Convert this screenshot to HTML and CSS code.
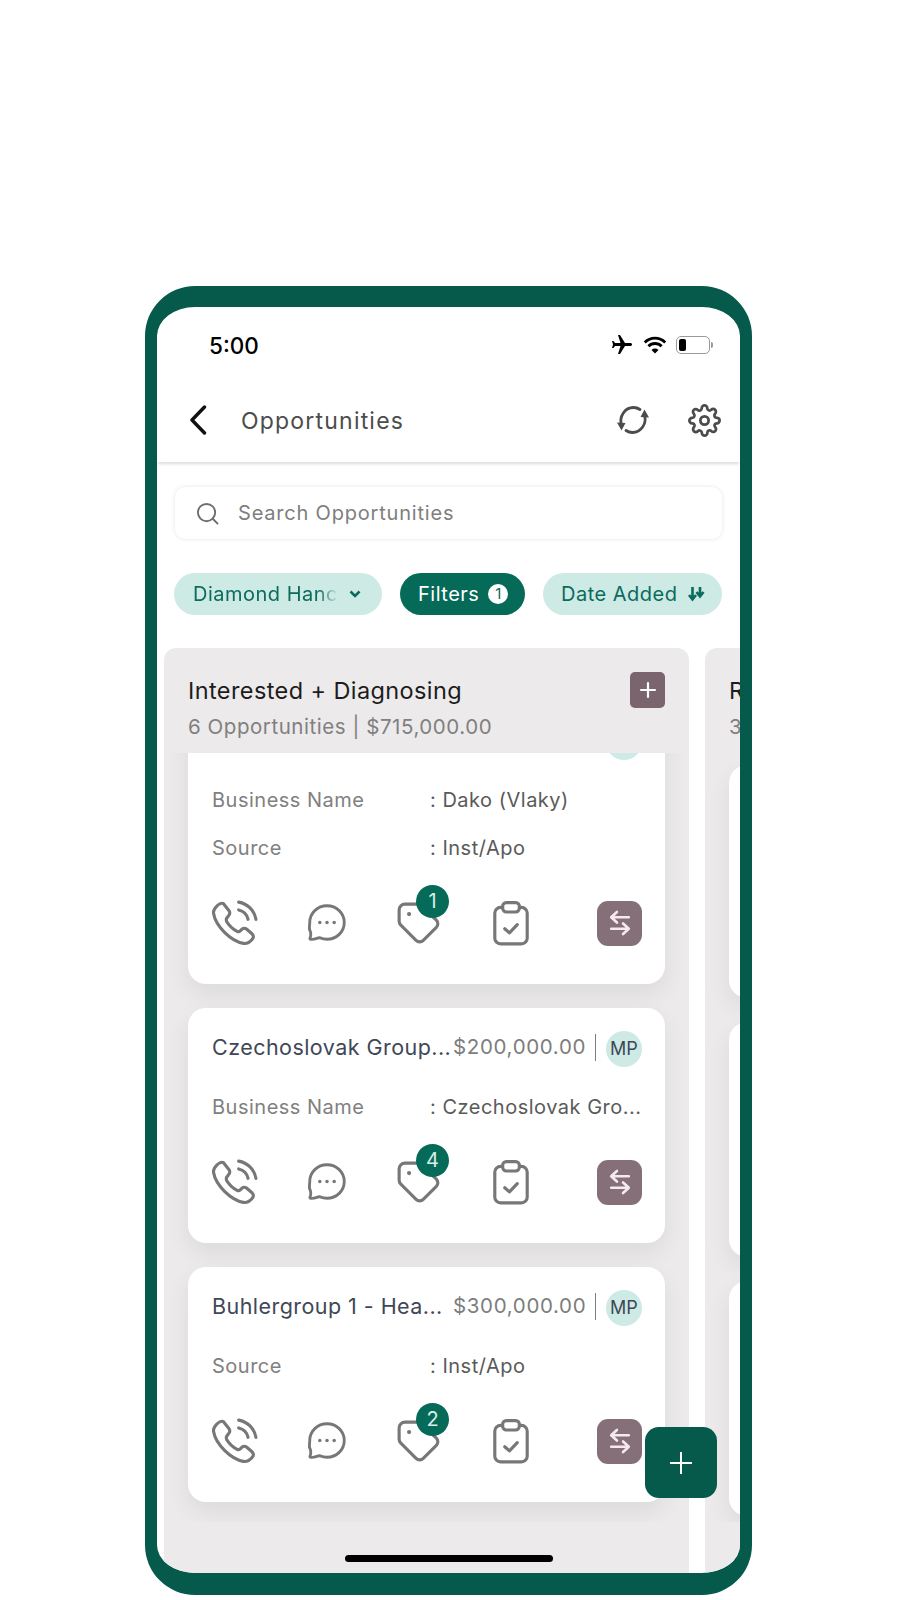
FILE: index.html
```html
<!DOCTYPE html>
<html>
  <head>
    <title>Opportunities</title>
    <link rel="stylesheet" href="styles.css">
  </head>
  <body>
    <svg class="defs" width="0" height="0">
      <symbol id="i-call" viewBox="0 0 44 44">
        <path d="M4 6.500C6 4 9 2.500 11 3.500L16.500 10.500C17.500 12.500 17 14 15.500 15.500L14 17.500C13.500 18.500 13.600 19.500 14 20.500C16 24 19.500 27.500 24 30C25 30.500 26 30.500 27 29.500L28.500 28C30 26.800 31.700 26.800 33 27.800L38 32C40 33.700 40 36 38.500 37.500C36 40.500 33 42 30 41.500C18 39.500 3.500 25 1.500 13C1 10.500 2.500 8 4 6.500z"/>
        <path d="M25.500 9.500C30 10.500 33.500 14 34.500 18.500"/>
        <path d="M25.500 2C34 3.500 40.500 10 42 18.500"/>
      </symbol>
      <symbol id="i-chat" viewBox="-2 -2 48 48">
        <path d="M22 4c10 0 18 7.800 18 17.500S32 39 22 39c-2.600 0-5-.5-7.200-1.400-1.200-.5-2.300 0-3.500.5-1.700.7-3.800 1.100-6.300 1-.7 0-1-.7-.7-1.300.8-1.600.9-3.300.7-5.300-.1-1.100-.5-2-1-3C3 27.500 4 24.500 4 21.500 4 11.800 12 4 22 4z"/>
        <circle class="dot" cx="14.500" cy="21.500" r="1.800"/>
        <circle class="dot" cx="22" cy="21.500" r="1.800"/>
        <circle class="dot" cx="29.500" cy="21.500" r="1.800"/>
      </symbol>
      <symbol id="i-tag" viewBox="0 0 44 44">
        <path d="M3 9.500v10.800c0 1.300.5 2.500 1.400 3.400l14.800 14.900c1.900 1.900 5 1.900 6.900 0l12.500-12.500c1.900-1.900 1.900-5 0-6.900L23.700 5.400C22.800 4.500 21.600 4 20.300 4H8.500C5.500 4 3 6.500 3 9.500z"/>
        <circle class="dot" cx="12.500" cy="13.500" r="2"/>
      </symbol>
      <symbol id="i-clip" viewBox="0 0 44 44">
        <path d="M14 7h-2c-3 0-5.500 2.500-5.500 5.500v24c0 3 2.500 5.500 5.500 5.500h20c3 0 5.500-2.500 5.500-5.500v-24C37.500 9.500 35 7 32 7h-2"/>
        <rect x="14" y="2.500" width="16" height="9" rx="3.500"/>
        <path d="M16 27.500l4.500 4 7.500-8"/>
      </symbol>
      <symbol id="i-swap" viewBox="-3 -3 50 50">
        <path d="M32 15.500H13M18.500 9.500l-6.500 6 6.500 6"/>
        <path d="M12 28.500h19M25.500 22.500l6.500 6-6.500 6"/>
      </symbol>
    </svg>

    <div class="phone">
      <div class="status-bar">
        <span class="time">5:00</span>
        <div class="status-icons">
          <svg class="plane" viewBox="0 0 24 24"><path transform="rotate(90 12 12)" d="M21 16v-2l-8-5V3.500c0-.83-.67-1.500-1.500-1.500S10 2.670 10 3.500V9l-8 5v2l8-2.500V19l-2 1.500V22l3.500-1 3.500 1v-1.500L13 19v-5.500l8 2.500z"/></svg>
          <svg class="wifi" viewBox="0 0 24 18"><path d="M1.800 6.400a14.500 14.500 0 0 1 20.400 0M5.400 10.200a9.400 9.400 0 0 1 13.200 0"/><path class="wifi-dot" d="M12 17.500l-3.500-3.600a5 5 0 0 1 7 0z"/></svg>
          <div class="battery"><span></span></div>
          <div class="battery-nub"></div>
        </div>
      </div>

      <header class="top-bar">
        <svg class="back" viewBox="0 0 18 30"><path d="M15.500 2L3 15l12.500 13"/></svg>
        <h1>Opportunities</h1>
        <svg class="refresh" viewBox="0 0 32 32">
          <path d="M4.500 20.500C2 13 7.500 3.500 16.500 3.500c2.500 0 4.500.6 6.500 2"/>
          <path d="M27.500 11.500C30 19 24.500 28.500 15.500 28.500c-2.500 0-4.500-.6-6.500-2"/>
          <path class="head" d="M0 18.500l8.500.5-4 7.500zM32 13.500l-8.500-.5 4-7.500z"/>
        </svg>
        <svg class="gear" viewBox="0 0 24 24">
          <circle cx="12" cy="12" r="3"/>
          <path d="M19.400 15a1.650 1.650 0 0 0 .33 1.820l.06.06a2 2 0 0 1 0 2.830 2 2 0 0 1-2.830 0l-.06-.06a1.650 1.650 0 0 0-1.820-.33 1.650 1.650 0 0 0-1 1.510V21a2 2 0 0 1-2 2 2 2 0 0 1-2-2v-.09A1.650 1.650 0 0 0 9 19.400a1.650 1.650 0 0 0-1.820.33l-.06.06a2 2 0 0 1-2.830 0 2 2 0 0 1 0-2.830l.06-.06a1.650 1.650 0 0 0 .33-1.820 1.650 1.650 0 0 0-1.510-1H3a2 2 0 0 1-2-2 2 2 0 0 1 2-2h.09A1.650 1.650 0 0 0 4.600 9a1.650 1.650 0 0 0-.33-1.820l-.06-.06a2 2 0 0 1 0-2.830 2 2 0 0 1 2.830 0l.06.06a1.650 1.650 0 0 0 1.820.33H9a1.650 1.650 0 0 0 1-1.510V3a2 2 0 0 1 2-2 2 2 0 0 1 2 2v.09a1.650 1.650 0 0 0 1 1.510 1.650 1.650 0 0 0 1.820-.33l.06-.06a2 2 0 0 1 2.830 0 2 2 0 0 1 0 2.830l-.06.06a1.650 1.650 0 0 0-.33 1.820V9a1.650 1.650 0 0 0 1.510 1H21a2 2 0 0 1 2 2 2 2 0 0 1-2 2h-.09a1.650 1.650 0 0 0-1.510 1z"/>
        </svg>
      </header>

      <div class="search">
        <svg viewBox="0 0 24 24"><circle cx="11" cy="11" r="9"/><path d="M17.500 17.500L22.500 22.500"/></svg>
        <span>Search Opportunities</span>
      </div>

      <div class="chips">
        <div class="chip chip-pipeline">
          <span class="chip-fade">Diamond Hanc</span>
          <svg class="chevron" viewBox="0 0 12 8"><path d="M1.500 1.500L6 6l4.500-4.500"/></svg>
        </div>
        <div class="chip chip-filters">Filters <span class="count">1</span></div>
        <div class="chip chip-sort">
          Date Added
          <svg class="sort" viewBox="0 0 18 16"><path d="M5.500 1v12M2 9l3.500 4.500L9 9M13 1v9M9.500 6L13 10.500 16.500 6"/></svg>
        </div>
      </div>

      <div class="board">
        <section class="column">
          <div class="column-head">
            <div>
              <h2>Interested + Diagnosing</h2>
              <p>6 Opportunities | $715,000.00</p>
            </div>
            <div class="add-btn">
              <svg viewBox="0 0 20 20"><path d="M10 3v14M3 10h14"/></svg>
            </div>
          </div>
          <div class="card-list scrolled">
            <article class="card">
              <div class="card-top">
                <span class="avatar"></span>
              </div>
              <div class="row"><span class="label">Business Name</span><span class="value">: Dako (Vlaky)</span></div>
              <div class="row"><span class="label">Source</span><span class="value">: Inst/Apo</span></div>
              <div class="actions">
                <svg class="icon"><use href="#i-call"/></svg>
                <svg class="icon"><use href="#i-chat"/></svg>
                <div class="tag-wrap"><svg class="icon"><use href="#i-tag"/></svg><span class="badge">1</span></div>
                <svg class="icon"><use href="#i-clip"/></svg>
                <div class="swap"><svg><use href="#i-swap"/></svg></div>
              </div>
            </article>
            <article class="card">
              <div class="card-top">
                <span class="card-name">Czechoslovak Group...</span>
                <span class="card-price">$200,000.00</span>
                <span class="avatar">MP</span>
              </div>
              <div class="row"><span class="label">Business Name</span><span class="value">: Czechoslovak Gro...</span></div>
              <div class="actions">
                <svg class="icon"><use href="#i-call"/></svg>
                <svg class="icon"><use href="#i-chat"/></svg>
                <div class="tag-wrap"><svg class="icon"><use href="#i-tag"/></svg><span class="badge">4</span></div>
                <svg class="icon"><use href="#i-clip"/></svg>
                <div class="swap"><svg><use href="#i-swap"/></svg></div>
              </div>
            </article>
            <article class="card">
              <div class="card-top">
                <span class="card-name">Buhlergroup 1 - Hea...</span>
                <span class="card-price">$300,000.00</span>
                <span class="avatar">MP</span>
              </div>
              <div class="row"><span class="label">Source</span><span class="value">: Inst/Apo</span></div>
              <div class="actions">
                <svg class="icon"><use href="#i-call"/></svg>
                <svg class="icon"><use href="#i-chat"/></svg>
                <div class="tag-wrap"><svg class="icon"><use href="#i-tag"/></svg><span class="badge">2</span></div>
                <svg class="icon"><use href="#i-clip"/></svg>
                <div class="swap"><svg><use href="#i-swap"/></svg></div>
              </div>
            </article>
          </div>
        </section>

        <section class="column">
          <div class="column-head">
            <div>
              <h2>R</h2>
              <p>3</p>
            </div>
          </div>
          <div class="card-list next-list">
            <article class="card card-blank"></article>
            <article class="card card-blank"></article>
            <article class="card card-blank"></article>
          </div>
        </section>
      </div>

      <div class="fab">
        <svg viewBox="0 0 26 26"><path d="M13 2v22M2 13h22"/></svg>
      </div>
      <div class="home-bar"></div>
    </div>
  </body>
</html>
```

FILE: styles.css
```css
* {
  box-sizing: border-box;
}

body {
  margin: 0;
  height: 1600px;
  padding: 286px 0 0 145px;
  background: #fff;
  font-family: Inter, "Noto Sans", sans-serif;
  overflow: hidden;
}

h1,
h2,
p {
  margin: 0;
  font-weight: 400;
}

svg {
  display: block;
  flex-shrink: 0;
}

.defs {
  position: absolute;
}

.defs path,
.defs rect {
  fill: none;
  stroke: currentColor;
  stroke-width: 3;
  stroke-linecap: round;
  stroke-linejoin: round;
}

.defs .dot {
  fill: currentColor;
}

.phone {
  position: relative;
  width: 607px;
  height: 1309px;
  display: flex;
  flex-direction: column;
  border: solid #055a4c;
  border-width: 21px 12px 22px;
  border-radius: 50px;
  background: #fff;
  overflow: hidden;
}

.status-bar {
  height: 76px;
  flex-shrink: 0;
  display: flex;
  align-items: center;
  justify-content: space-between;
  padding: 0 27px 0 52px;
}

.time {
  font-size: 22.5px;
  font-weight: 500;
  color: #000;
}

.status-icons {
  display: flex;
  align-items: center;
}

.plane {
  width: 24px;
  height: 24px;
  margin-right: 9px;
  fill: #000;
}

.wifi {
  width: 24px;
  height: 18px;
  margin-right: 9px;
  fill: none;
  stroke: #000;
  stroke-width: 2.8;
}

.wifi .wifi-dot {
  fill: #000;
  stroke: none;
}

.battery {
  width: 34px;
  height: 18px;
  padding: 2px;
  border: 1.5px solid #9a9a9a;
  border-radius: 5px;
}

.battery span {
  display: block;
  width: 7px;
  height: 100%;
  background: #000;
  border-radius: 2px;
}

.battery-nub {
  width: 2px;
  height: 6px;
  margin-left: 1px;
  background: #9a9a9a;
  border-radius: 0 2px 2px 0;
}

.top-bar {
  position: relative;
  height: 79px;
  flex-shrink: 0;
  display: flex;
  align-items: center;
  padding: 0 19px 5px 32px;
  box-shadow: 0 3px 3px -1px rgba(0, 0, 0, 0.14);
}

.back {
  width: 18px;
  height: 30px;
  fill: none;
  stroke: #111;
  stroke-width: 3.4;
  stroke-linecap: round;
  stroke-linejoin: round;
}

.top-bar h1 {
  flex: 1;
  margin: 2px 0 0 34px;
  font-size: 23px;
  letter-spacing: 1.2px;
  color: #4c4c4c;
}

.refresh {
  width: 32px;
  height: 32px;
  margin-right: 39px;
  fill: none;
  stroke: #4c4c4c;
  stroke-width: 2.8;
  stroke-linecap: round;
}

.refresh .head {
  fill: #4c4c4c;
  stroke: none;
}

.gear {
  width: 33px;
  height: 33px;
  fill: none;
  stroke: #4c4c4c;
  stroke-width: 2;
}

.search {
  flex-shrink: 0;
  height: 52px;
  margin: 25px 18px 0;
  padding-left: 21px;
  display: flex;
  align-items: center;
  gap: 19px;
  background: #fff;
  border-radius: 10px;
  box-shadow: 0 0 4px rgba(0, 0, 0, 0.11);
  font-size: 20px;
  letter-spacing: 0.8px;
  color: #7e7e7e;
}

.search svg {
  width: 23px;
  height: 23px;
  fill: none;
  stroke: #6e6e6e;
  stroke-width: 2;
  stroke-linecap: round;
}

.chips {
  flex-shrink: 0;
  display: flex;
  gap: 18px;
  margin-top: 34px;
  padding-left: 17px;
}

.chip {
  height: 42px;
  display: flex;
  align-items: center;
  border-radius: 21px;
  background: #cdeae5;
  color: #0b6b5c;
  font-size: 20px;
  letter-spacing: 0.5px;
  white-space: nowrap;
}

.chip-pipeline {
  width: 208px;
  padding-left: 19px;
}

.chip-fade {
  width: 145px;
  overflow: hidden;
  -webkit-mask-image: linear-gradient(to right, #000 86%, transparent);
  mask-image: linear-gradient(to right, #000 86%, transparent);
}

.chevron {
  width: 12px;
  height: 8px;
  margin-left: 11px;
  fill: none;
  stroke: #0b6b5c;
  stroke-width: 2.6;
}

.chip-filters {
  width: 125px;
  padding-left: 18px;
  gap: 9px;
  background: #056b58;
  color: #fff;
}

.count {
  width: 20px;
  height: 20px;
  border-radius: 50%;
  background: #fff;
  color: #056b58;
  font-size: 15px;
  letter-spacing: 0;
  text-align: center;
  line-height: 20px;
}

.chip-sort {
  width: 179px;
  padding-left: 18px;
  gap: 9px;
}

.sort {
  width: 18px;
  height: 16px;
  fill: none;
  stroke: #0b6b5c;
  stroke-width: 2.6;
}

.board {
  flex: 1;
  min-height: 0;
  display: flex;
  gap: 16px;
  margin-top: 33px;
  padding-left: 7px;
  overflow: hidden;
}

.column {
  width: 525px;
  flex-shrink: 0;
  display: flex;
  flex-direction: column;
  background: #eceaeb;
  border-radius: 12px 12px 0 0;
}

.column-head {
  height: 105px;
  flex-shrink: 0;
  display: flex;
  justify-content: space-between;
  padding: 0 24px;
}

.column-head h2 {
  margin-top: 28px;
  font-size: 23.5px;
  line-height: 30px;
  color: #1c1c1c;
  letter-spacing: 0.4px;
}

.column-head p {
  margin-top: 8px;
  font-size: 20.5px;
  line-height: 26px;
  letter-spacing: 0.55px;
  color: #808080;
}

.add-btn {
  width: 35px;
  height: 36px;
  margin-top: 24px;
  display: flex;
  align-items: center;
  justify-content: center;
  background: #7a646e;
  border-radius: 5px;
}

.add-btn svg {
  width: 20px;
  height: 20px;
  fill: none;
  stroke: #fff;
  stroke-width: 2.2;
  stroke-linecap: round;
}

.card-list {
  height: 769px;
  padding: 0 24px;
  overflow: hidden;
}

.scrolled .card:first-child {
  margin-top: -52px;
}

.next-list {
  padding-top: 12px;
}

.card {
  margin-bottom: 24px;
  padding: 20px 23px 38px 24px;
  background: #fff;
  border-radius: 18px;
  box-shadow: 0 10px 24px rgba(0, 0, 0, 0.07);
}

.card-top {
  height: 38px;
  display: flex;
  align-items: center;
}

.card-name {
  width: 241px;
  font-size: 21.5px;
  letter-spacing: 0.45px;
  color: #3f4757;
  white-space: nowrap;
}

.card-price {
  width: 143px;
  height: 27px;
  font-size: 20.5px;
  letter-spacing: 0.65px;
  line-height: 25px;
  color: #7d7d7d;
  border-right: 1.5px solid #7d7d7d;
  white-space: nowrap;
}

.avatar {
  width: 36px;
  height: 36px;
  margin-left: auto;
  position: relative;
  top: 2px;
  border-radius: 50%;
  background: #cdeae5;
  color: #3f4757;
  font-size: 18px;
  line-height: 36px;
  text-align: center;
}

.row {
  display: flex;
  height: 48px;
  align-items: center;
  font-size: 20px;
  letter-spacing: 0.5px;
  white-space: nowrap;
}

.card-top + .row {
  margin-top: 17px;
}

.label {
  width: 218px;
  color: #808080;
}

.value {
  color: #5a5a5a;
}

.actions {
  display: flex;
  align-items: center;
  gap: 46px;
  margin-top: 28px;
  color: #777;
}

.icon {
  width: 46px;
  height: 46px;
}

.tag-wrap {
  position: relative;
}

.badge {
  position: absolute;
  top: -15px;
  left: 20px;
  width: 33px;
  height: 33px;
  border-radius: 50%;
  background: #056b58;
  color: #d8efe9;
  font-size: 20px;
  line-height: 33px;
  text-align: center;
}

.swap {
  width: 45px;
  height: 45px;
  margin-left: auto;
  display: flex;
  align-items: center;
  justify-content: center;
  background: #857079;
  border-radius: 11px;
  color: #f5e8ee;
}

.swap svg {
  width: 44px;
  height: 44px;
}

.card-blank {
  height: 235px;
  padding: 0;
}

.next-list .card-blank:first-child {
  height: 233px;
}

.fab {
  position: absolute;
  left: 488px;
  top: 1120px;
  width: 72px;
  height: 71px;
  display: flex;
  align-items: center;
  justify-content: center;
  background: #055a4c;
  border-radius: 14px;
}

.fab svg {
  width: 26px;
  height: 26px;
  fill: none;
  stroke: #fff;
  stroke-width: 2;
}

.home-bar {
  position: absolute;
  left: 188px;
  top: 1248px;
  width: 208px;
  height: 7px;
  background: #000;
  border-radius: 4px;
}
```
